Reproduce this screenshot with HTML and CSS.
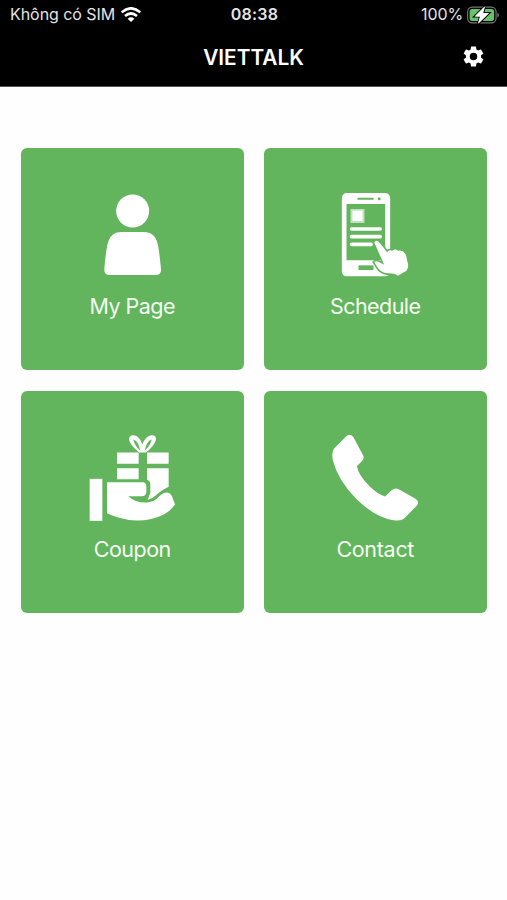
FILE: index.html
```html
<!DOCTYPE html>
<html lang="vi">
<head>
<meta charset="utf-8">
<meta name="viewport" content="width=device-width, initial-scale=1">
<title>VIETTALK</title>
<link rel="stylesheet" href="styles.css">
</head>
<body>
<header class="header">
  <div class="status">
    <div class="carrier">
      <span class="carrier-name">Không có SIM</span>
      <svg class="wifi" viewBox="0 0 60 45"><g fill="none" stroke="#fff" stroke-width="8"><path d="M2 16Q30-8 58 16"/><path d="M12 27Q30 12 48 27"/></g><path d="M20 35Q30 27 40 35L30 45Z" fill="#fff"/></svg>
    </div>
    <span class="clock">08:38</span>
    <div class="power">
      <span class="percent">100%</span>
      <svg class="battery" viewBox="0 0 98 54"><rect x="2" y="3" width="87" height="48" rx="14" fill="none" stroke="#777" stroke-width="3.5"/><rect x="8" y="9" width="75" height="36" rx="8" fill="#65c468"/><path d="M93 19q5 3 5 8t-5 8z" fill="#777"/><path d="M54 2L25 31H41L35 52L66 22H48Z" fill="#fff" stroke="#000" stroke-width="8" paint-order="stroke"/><path d="M54 2L25 31H41L35 52L66 22H48Z" fill="#fff" stroke="#fff" stroke-width="2"/></svg>
    </div>
  </div>
  <div class="navbar">
    <h1 class="title">VIETTALK</h1>
    <svg class="gear" viewBox="2 2 20 20"><path fill="#fff" d="M19.14 12.94c.04-.3.06-.61.06-.94 0-.32-.02-.64-.07-.94l2.03-1.58a.49.49 0 0 0 .12-.61l-1.92-3.32a.488.488 0 0 0-.59-.22l-2.39.96c-.5-.38-1.03-.7-1.62-.94l-.36-2.54a.484.484 0 0 0-.48-.41h-3.84c-.24 0-.43.17-.47.41l-.36 2.54c-.59.24-1.13.57-1.62.94l-2.39-.96c-.22-.08-.47 0-.59.22L2.74 8.87c-.12.21-.08.47.12.61l2.03 1.58c-.05.3-.09.63-.09.94s.02.64.07.94l-2.03 1.58a.49.49 0 0 0-.12.61l1.92 3.32c.12.22.37.29.59.22l2.39-.96c.5.38 1.03.7 1.62.94l.36 2.54c.05.24.24.41.48.41h3.84c.24 0 .44-.17.47-.41l.36-2.54c.59-.24 1.13-.56 1.62-.94l2.39.96c.22.08.47 0 .59-.22l1.92-3.32c.12-.22.07-.47-.12-.61l-2.01-1.58zM12 15.6A3.6 3.6 0 1 1 12 8.4a3.6 3.6 0 0 1 0 7.2z"/></svg>
  </div>
</header>
<main class="menu">
  <a class="tile">
    <svg class="icon" viewBox="21 30 270 270" fill="#fff"><circle cx="158" cy="93" r="49.5"/><path d="M124 156H191Q226 156 234 195Q239 224 243 268Q244 285 227 285H89Q72 285 73 268Q76 224 82 195Q90 156 124 156Z"/></svg>
    <span class="label my-page">My Page</span>
  </a>
  <a class="tile">
    <svg class="icon" viewBox="31.5 30 270 270">
      <path fill="#fff" fill-rule="evenodd" d="M83 39H195Q212 39 212 56V272Q212 289 195 289H83Q67 289 67 272V56Q67 39 83 39ZM81 72V241H197V72Z"/>
      <path d="M116 56H160" stroke="#62b55c" stroke-width="6" stroke-linecap="round"/><circle cx="179" cy="56" r="4.5" fill="#62b55c"/>
      <path fill="#62b55c" d="M117 256H162V270H117Z"/>
      <path fill="#bfe3bb" d="M93 87H135V129H93Z"/><path fill="#fff" d="M99 92H129V123H99Z"/>
      <path d="M96 147H182M96 170H182M96 193H155" stroke="#fff" stroke-width="11" stroke-linecap="round"/>
      <path d="M164 187Q171 176 181 189L203 217Q208 208 218 212Q228 205 236 212Q249 209 256 220Q262 229 263 242Q270 261 261 272L235 287Q224 279 202 280Q181 276 173 260L164 246Q171 241 184 249L194 254Z" fill="#fff" stroke="#62b55c" stroke-width="10" stroke-linejoin="round" paint-order="stroke"/>
    </svg>
    <span class="label schedule">Schedule</span>
  </a>
  <a class="tile">
    <svg class="icon" viewBox="21 22.5 270 270" fill="#fff">
      <path d="M29 160H67V286H29Z"/>
      <path d="M111 81H176V115H111ZM201 81H266V115H201ZM111 128H176V161H111ZM201 128H266V184Q240 197 226 211Q216 221 203 223L211 202V177Q211 166 201 163Z"/>
      <path d="M178 81Q152 62 147 43Q146 28 162 29Q180 33 187 57Q195 33 214 29Q230 28 228 43Q222 64 197 81Z"/>
      <path d="M181 76Q162 58 160 42Q175 46 181 76ZM194 76Q213 58 215 42Q200 46 194 76Z" fill="#62b55c"/>
      <path d="M81 170H190Q199 172 199 184V201Q197 212 186 212H145Q166 233 203 231Q223 229 237 213Q249 201 262 201Q271 202 276 212L285 237Q269 261 236 274Q205 286 169 285Q124 283 81 263Z"/>
    </svg>
    <span class="label coupon">Coupon</span>
  </a>
  <a class="tile">
    <svg class="icon" viewBox="31.5 22.5 270 270" fill="#fff"><path d="M82 31Q92 23 101 34L130 88Q136 98 127 107L112 122Q117 149 151 183Q174 206 197 213L213 197Q224 185 238 191L288 220Q300 228 293 239L254 279Q244 288 222 284Q171 278 112 222Q55 164 40 104Q35 80 44 69Z"/></svg>
    <span class="label contact">Contact</span>
  </a>
</main>
</body>
</html>
```
FILE: styles.css
```css
* { box-sizing: border-box; }
body {
  margin: 0;
  background: #fefefe;
  font-family: Inter, "Liberation Sans", sans-serif;
}
.header {
  height: 87px;
  background: #000;
  border-bottom: 1px solid #555;
  color: #fff;
}
.status {
  display: grid;
  grid-template-columns: 1fr auto 1fr;
  align-items: center;
  height: 29px;
  padding: 0 8px 0 10px;
  font-size: 16px;
  line-height: 29px;
  color: #e4e4e4;
}
.carrier, .power { display: flex; align-items: center; }
.carrier { gap: 6px; }
.carrier-name { letter-spacing: -0.05px; }
.power { justify-content: flex-end; gap: 4px; }
.percent { letter-spacing: -0.1px; }
.wifi { width: 20px; height: 15px; }
.battery { width: 32px; height: 18px; }
.clock { font-weight: 600; letter-spacing: 0.2px; }
.navbar {
  display: grid;
  grid-template-columns: 1fr auto 1fr;
  align-items: center;
  height: 57px;
  padding: 0 23px;
}
.title {
  grid-column: 2;
  margin: 0;
  font-size: 20.8px;
  font-weight: 600;
  line-height: 57px;
}
.gear { justify-self: end; width: 21px; height: 21px; margin-bottom: 2px; }
.menu {
  display: grid;
  grid-template-columns: 222.5px 222.5px;
  grid-auto-rows: 222.25px;
  gap: 20.5px;
  padding: 61px 0 0 21px;
}
.tile {
  display: flex;
  flex-direction: column;
  align-items: center;
  padding-top: 42px;
  border-radius: 6px;
  background: #62b55c;
  color: #f4fff2;
}
.icon { width: 90px; height: 90px; }
.label {
  margin-top: 11px;
  font-size: 21.5px;
  line-height: 30px;
  letter-spacing: -0.55px;
  white-space: nowrap;
}
.contact { letter-spacing: -0.3px; }
```
